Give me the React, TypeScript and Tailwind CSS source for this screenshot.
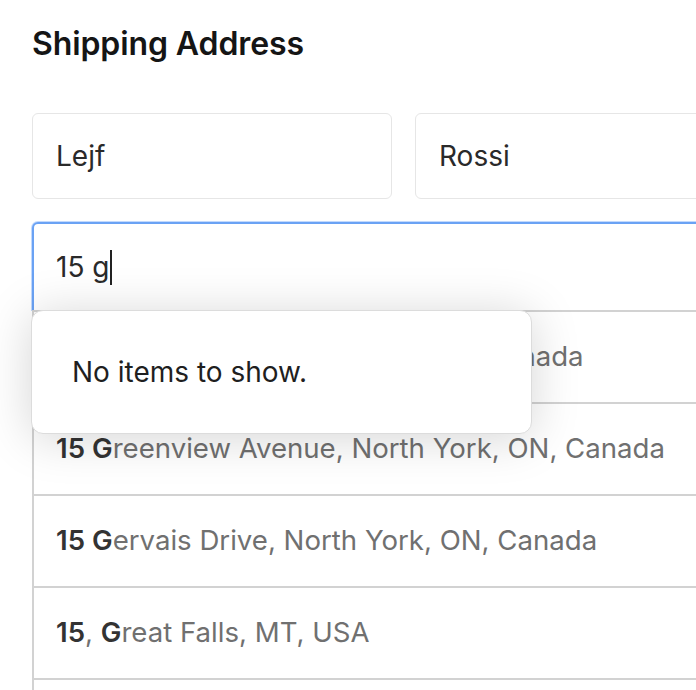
const rows = [
  { bold: '15 G', rest: 'rover Road, North York, ON, Canada' },
  { bold: '15 G', rest: 'reenview Avenue, North York, ON, Canada' },
  { bold: '15 G', rest: 'ervais Drive, North York, ON, Canada' },
  { bold: '15', sep: ', ', bold2: 'G', rest: 'reat Falls, MT, USA' }
]

function TextField({ value }: { value: string }) {
  return (
    <div className="h-[86px] flex items-center px-[23px] rounded-md border border-[#e6e6e6] bg-white text-[28px] text-[#2a2a2a]">
      {value}
    </div>
  )
}

export default function App() {
  return (
    <div className="w-[696px] h-[690px] overflow-hidden bg-white font-['Inter','Liberation_Sans',sans-serif]">
      <div className="w-[1000px] pl-8 pt-[25px]">
        <h2 className="text-[32px] leading-[38px] font-semibold text-[#151515] tracking-[-0.1px]">Shipping Address</h2>

        <div className="mt-[50px] grid grid-cols-[360px_360px] gap-[23px]">
          <TextField value="Lejf" />
          <TextField value="Rossi" />
        </div>

        <div className="relative mt-[23px] w-[743px]">
          <div className="h-[88px] flex items-center px-[22px] rounded-t-md border-2 border-b-0 border-[#6aa2f4] shadow-[0_0_0_1px_rgba(120,170,250,0.45)] bg-white text-[28px] text-[#2a2a2a]">
            <span>15 g</span>
            <span className="ml-[1px] w-[2px] h-[35px] bg-[#222]" />
          </div>

          <div className="border-l-2 border-t-2 border-[#d2d2d2] text-[27.6px]">
            {rows.map((r, i) => (
              <div key={i} className="h-[92px] flex items-center pl-[22px] border-b-2 border-[#d2d2d2] text-[#707070]">
                <span className="whitespace-pre">
                  <span className="font-semibold text-[#333]">{r.bold}</span>
                  {r.sep}
                  {r.bold2 && <span className="font-semibold text-[#333]">{r.bold2}</span>}
                  {r.rest}
                </span>
              </div>
            ))}
            <div className="h-[92px]" />
          </div>

          <div className="absolute left-[-1px] top-[88px] w-[501px] h-[124px] flex items-center pl-[40px] rounded-xl border border-[#dcdcdc] bg-white shadow-[0_4px_48px_rgba(0,0,0,0.17)] text-[28px] text-[#1f1f1f]">
            No items to show.
          </div>
        </div>
      </div>
    </div>
  )
}
